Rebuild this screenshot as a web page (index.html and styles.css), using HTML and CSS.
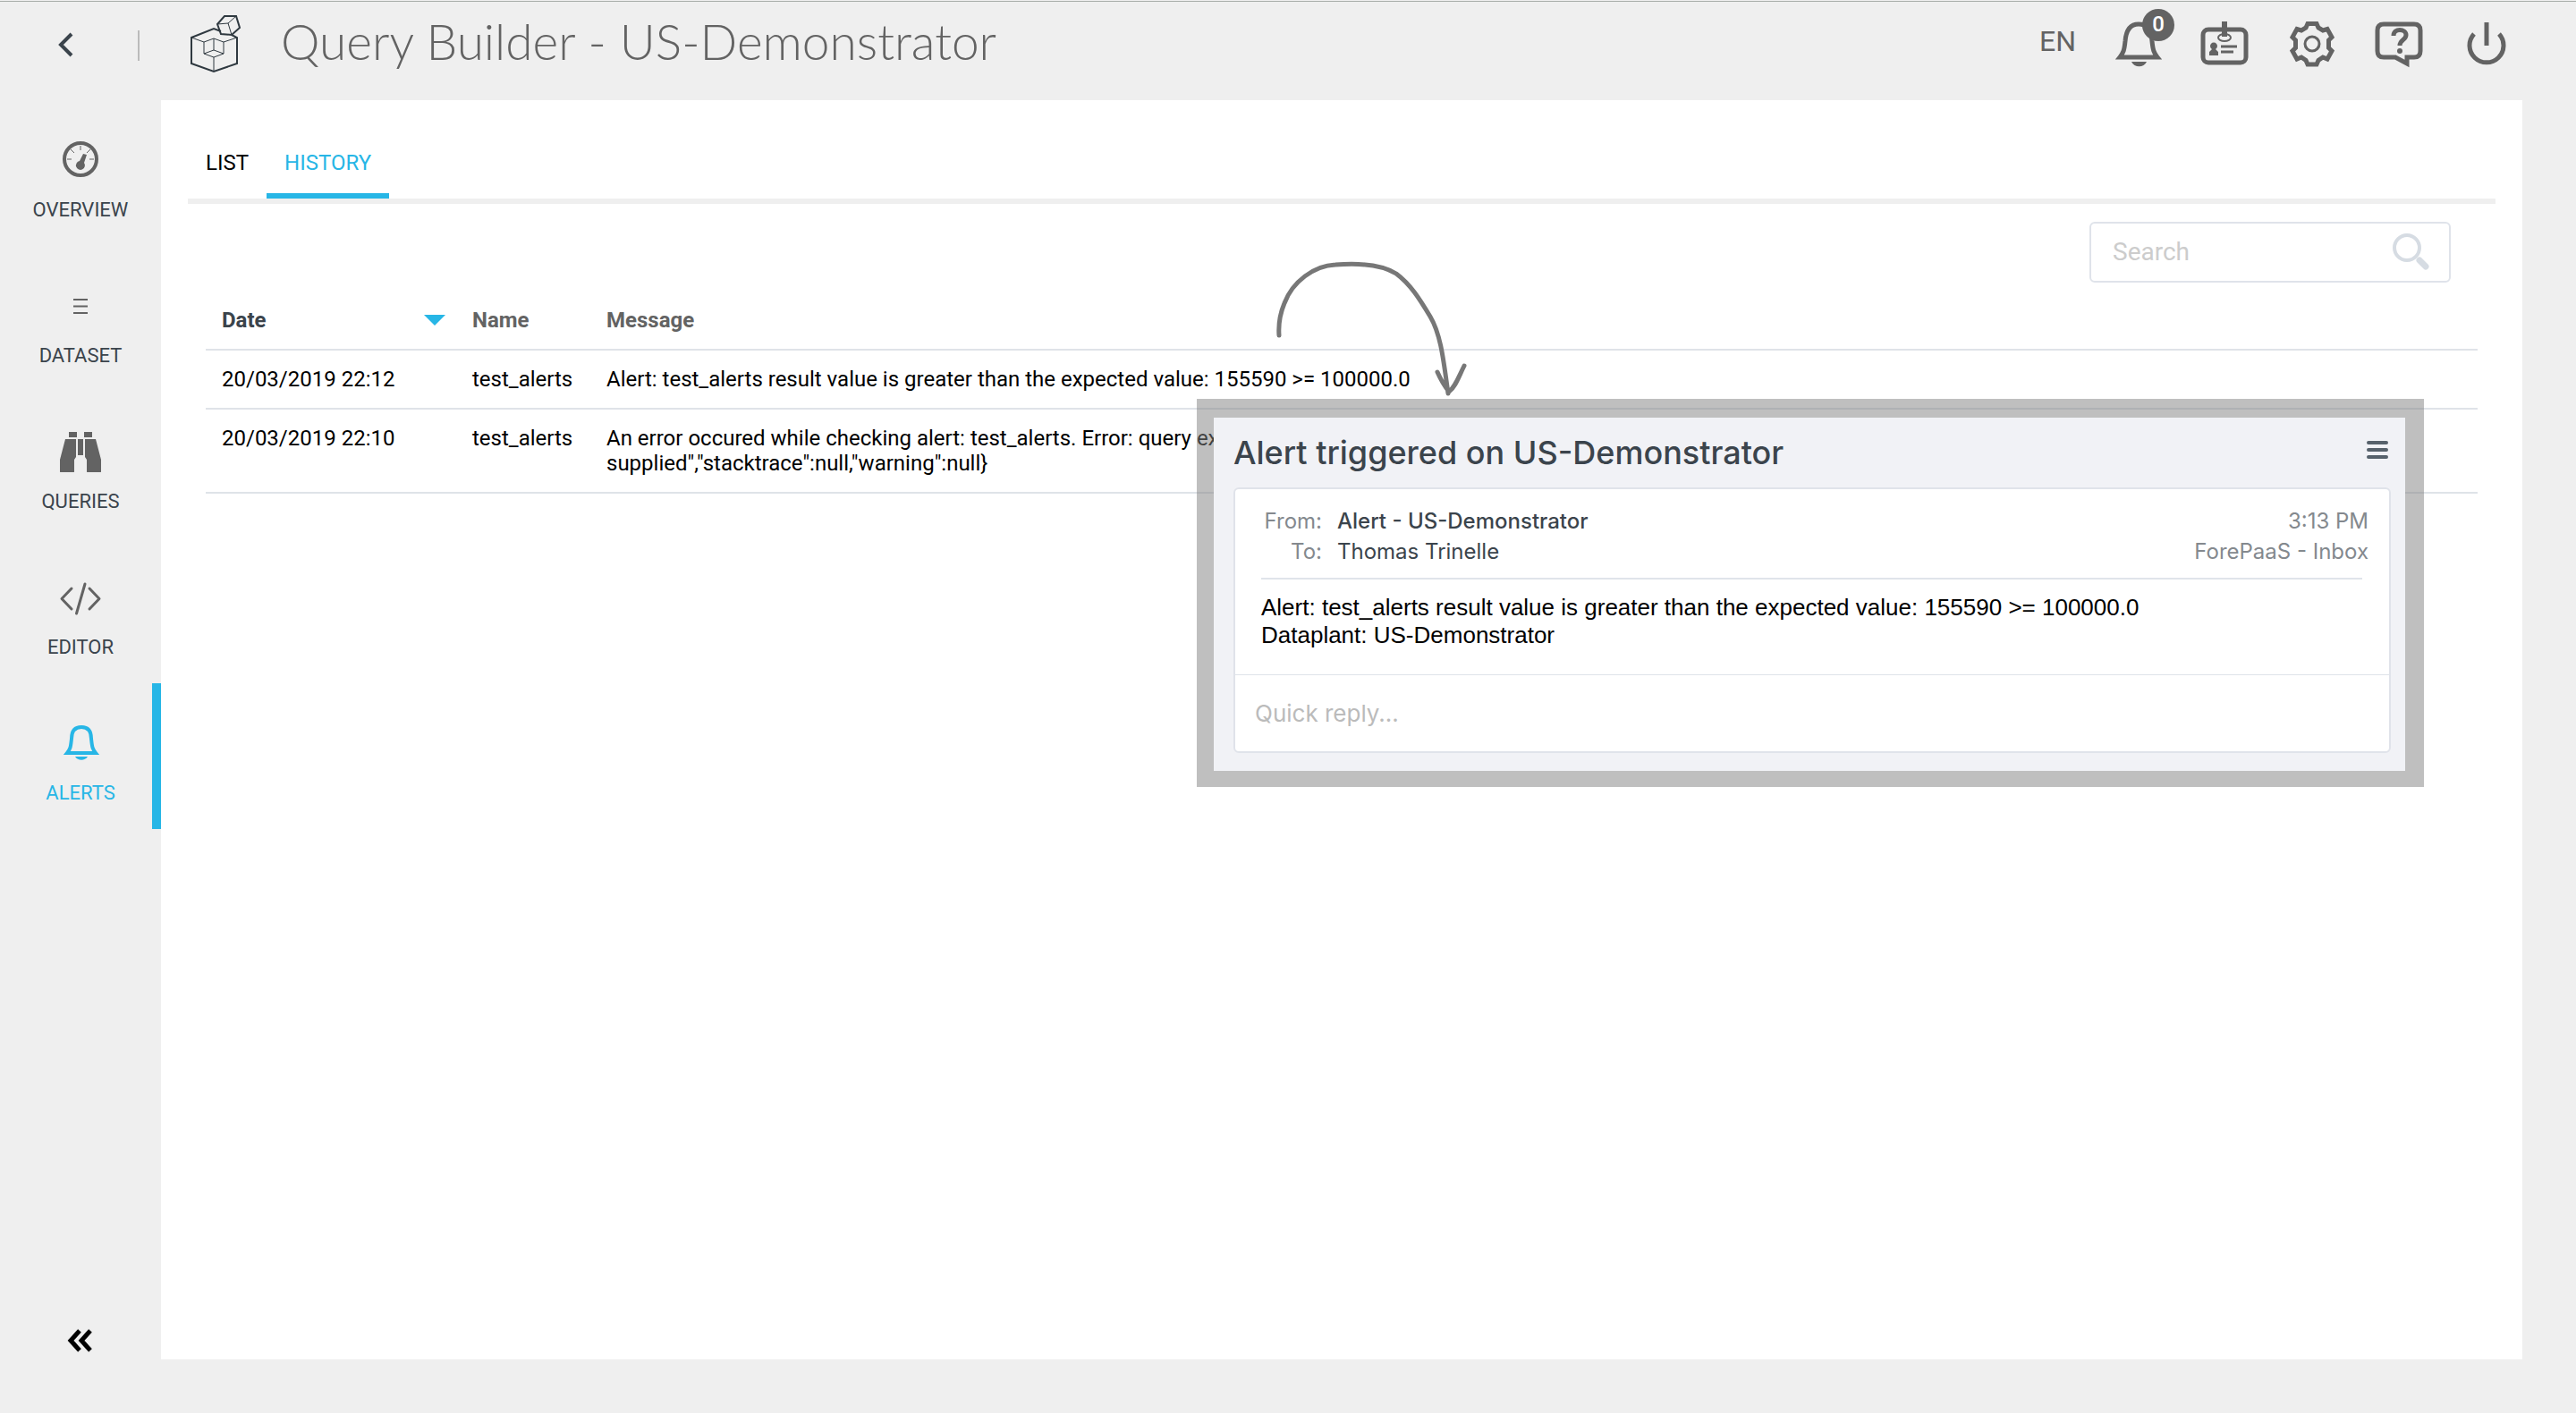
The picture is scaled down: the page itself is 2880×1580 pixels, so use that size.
FILE: index.html
```html
<!DOCTYPE html>
<html lang="en">
<head>
<meta charset="utf-8">
<meta name="viewport" content="width=device-width, initial-scale=1">
<title>Query Builder - US-Demonstrator</title>
<link rel="stylesheet" href="styles.css">
</head>
<body>
<header class="topbar">
  <button class="back" type="button" aria-label="Back">
    <svg width="20" height="32" viewBox="0 0 20 32"><path class="line line-4" d="M16 4 4 16l12 12"/></svg>
  </button>
  <span class="separator"></span>
  <svg class="logo" width="60" height="68" viewBox="0 0 60 68">
    <path class="line line-2" d="M37 19 29 16 4 26v29l25 9 26-9V26l-6-3"/>
    <path class="line line-1" d="M4 26l14 5 11-4 11 4 15-5M18 31v13l11-4 11 4V31M29 27v13M18 44l11 4 11-4M29 48v16"/>
    <path class="line line-2" d="M41 2h13l4 13-9 8-12-1-4-11z"/>
    <path class="line line-1" d="M33 11l12-1 9-8M45 10l4 13"/>
  </svg>
  <h1 class="title">Query Builder - US-Demonstrator</h1>
  <button class="lang" type="button">EN</button>
  <nav class="tools" aria-label="Account">
    <button class="tool" type="button" aria-label="Notifications">
      <svg width="60" height="60" viewBox="0 0 60 60"><path class="line line-5" d="M8 44c4-5 5-8 6-18C15 13 20 7 29 7s14 6 15 19c1 10 2 13 6 18z"/><path class="solid" d="M21 49h17c-3 7-14 7-17 0z"/></svg>
      <span class="badge">0</span>
    </button>
    <button class="tool" type="button" aria-label="Profile">
      <svg width="60" height="60" viewBox="0 0 60 60"><rect class="line line-5" x="4" y="13" width="48" height="37" rx="6"/><ellipse class="line line-2" cx="28" cy="22" rx="7" ry="4"/><path class="solid" d="M25 4h6v17h-6zM11 42v-4l3-3a4 4 0 1 1 4 0l3 3v4z"/><path class="line line-3" d="M24 32h18M24 38h14"/></svg>
    </button>
    <button class="tool" type="button" aria-label="Settings">
      <svg width="60" height="60" viewBox="0 0 60 60"><path class="line line-5" d="M24 6.500h10L36 11l5 3 5-1.500 5 9-3.500 3.500v8.500L51 37l-5 9-5-2-5 3.500-2 4.500H24l-2-4.500-5-3.500-5 2-5-9 3.500-3.500V25L7 21.500l5-9 5 1.500 5-3z"/><circle class="line line-3" cx="29" cy="29" r="8"/></svg>
    </button>
    <button class="tool" type="button" aria-label="Help">
      <svg width="60" height="60" viewBox="0 0 60 60"><path class="line line-5" d="M12 7h34q7 0 7 7v23q0 7-7 7h-8v7l-13-7H12q-7 0-7-7V14q0-7 7-7z"/><path class="line line-5" d="M23 20c0-9 14-8 14-1 0 6-7 5-7 12"/><circle class="solid" cx="30" cy="37" r="3"/></svg>
    </button>
    <button class="tool" type="button" aria-label="Log out">
      <svg width="60" height="60" viewBox="0 0 60 60"><path class="line line-5" d="M16 18a19 19 0 1 0 28 0M30 5v26"/></svg>
    </button>
  </nav>
</header>

<div class="layout">
  <nav class="sidebar" aria-label="Sections">
    <a class="item" href="#overview">
      <svg width="48" height="48" viewBox="0 0 48 48"><circle class="line line-4" cx="24" cy="24" r="18"/><path class="line line-1" d="M24 9v5M13 13l4 4M35 13l-4 4M9 24h5M34 24h5"/><path class="solid" d="M27 18l4 1-3 9a5 5 0 1 1-5-2z"/></svg>
      <span>OVERVIEW</span>
    </a>
    <a class="item" href="#dataset">
      <svg width="48" height="48" viewBox="0 0 48 48"><path class="line line-2" d="M16 18h16M16 25.500h16M16 33h16"/></svg>
      <span>DATASET</span>
    </a>
    <a class="item" href="#queries">
      <svg width="48" height="48" viewBox="0 0 48 48"><path class="solid" d="M11 3h9v6h-9zM28 3h9v6h-9zM21 11h6v18h-6zM7 11h12v20l-2 3v13q0 2-2 2H3q-2 0-2-2V34zM41 11H29v20l2 3v13q0 2 2 2h12q2 0 2-2V34z"/></svg>
      <span>QUERIES</span>
    </a>
    <a class="item" href="#editor">
      <svg width="48" height="48" viewBox="0 0 48 48"><path class="line line-3 round" d="M14 15 3 26.500 14 38M34 15l11 11.500L34 38M29 10l-9.500 33"/></svg>
      <span>EDITOR</span>
    </a>
    <a class="item active" href="#alerts" aria-current="page">
      <svg width="48" height="48" viewBox="0 0 48 48"><path class="line line-4" d="M9 36c4-5 4-7 5-16 0-9 4-13 11-13s11 4 11 13c1 9 1 11 5 16z"/><path class="solid" d="M18 40h14c-3 5-11 5-14 0z"/></svg>
      <span>ALERTS</span>
    </a>
    <button class="collapse" type="button" aria-label="Collapse menu">
      <svg width="30" height="28" viewBox="0 0 30 28"><path class="line line-5" d="M14 3 4 14l10 11M26 3 16 14l10 11"/></svg>
    </button>
  </nav>

  <main class="panel">
    <nav class="tabs" aria-label="Alerts">
      <a class="tab" href="#list">LIST</a>
      <a class="tab active" href="#history" aria-current="page">HISTORY</a>
    </nav>
    <div class="content">
      <form class="search" role="search">
        <input class="search-input" type="search" placeholder="Search" aria-label="Search">
        <svg width="44" height="44" viewBox="0 0 44 44"><circle class="line line-4" cx="17" cy="17" r="14"/><path class="line line-7 round" d="M31 31l7 7"/></svg>
      </form>
      <table class="history">
        <thead>
          <tr>
            <th class="col-date" scope="col" aria-sort="descending"><button class="sort" type="button">Date<span class="caret"></span></button></th>
            <th class="col-name" scope="col">Name</th>
            <th scope="col">Message</th>
          </tr>
        </thead>
        <tbody>
          <tr>
            <td>20/03/2019 22:12</td>
            <td>test_alerts</td>
            <td>Alert: test_alerts result value is greater than the expected value: 155590 &gt;= 100000.0</td>
          </tr>
          <tr>
            <td>20/03/2019 22:10</td>
            <td>test_alerts</td>
            <td>An error occured while checking alert: test_alerts. Error: query ex<br>supplied","stacktrace":null,"warning":null}</td>
          </tr>
        </tbody>
      </table>
    </div>

    <svg class="arrow" width="220" height="160" viewBox="0 0 220 160"><path class="line line-5 round" d="M9 86C8 72 10 62 15 50 24 26 48 8 72 7c26-2 52 0 68 10 16 12 26 28 38 48 12 20 15 50 20 86M186 127c4 9 9 17 13 22 7-5 11-17 17-29"/></svg>

    <section class="mail" aria-label="Alert email">
      <div class="mail-window">
        <div class="mail-head">
          <h2 class="mail-title">Alert triggered on US-Demonstrator</h2>
          <button class="mail-menu" type="button" aria-label="Menu">
            <svg width="26" height="28" viewBox="0 0 26 28"><path class="line line-4 round" d="M3 4h20M3 12h20M3 20h20"/></svg>
          </button>
        </div>
        <article class="mail-card">
          <div class="mail-meta">
            <dl class="people">
              <dt>From:</dt><dd class="sender">Alert - US-Demonstrator</dd>
              <dt>To:</dt><dd>Thomas Trinelle</dd>
            </dl>
            <div class="where">3:13 PM<br>ForePaaS - Inbox</div>
          </div>
          <p class="mail-body">Alert: test_alerts result value is greater than the expected value: 155590 &gt;= 100000.0<br>Dataplant: US-Demonstrator</p>
          <input class="reply" type="text" placeholder="Quick reply..." aria-label="Quick reply">
        </article>
      </div>
    </section>
  </main>
</div>
</body>
</html>
```
FILE: styles.css
```css
*,
*::before,
*::after {
  box-sizing: border-box;
}

body {
  display: flex;
  flex-direction: column;
  min-height: 100vh;
  margin: 0;
  padding-top: 1px;
  background: #efefef;
  color: #000;
  font: 24px/28px Roboto, "Liberation Sans", sans-serif;
}

button,
input {
  margin: 0;
  padding: 0;
  border: 0;
  background: none;
  color: inherit;
  font: inherit;
}

a {
  color: inherit;
  text-decoration: none;
}

svg {
  display: block;
  flex: none;
}

/* Icon strokes */
.line { fill: none; stroke: currentColor; }
.line-1 { stroke-width: 1; }
.line-2 { stroke-width: 2; }
.line-3 { stroke-width: 3; }
.line-4 { stroke-width: 4; }
.line-5 { stroke-width: 5; }
.line-7 { stroke-width: 7; }
.round { stroke-linecap: round; stroke-linejoin: round; }
.solid { fill: currentColor; }

/* Top bar */
.topbar {
  display: flex;
  align-items: flex-start;
  height: 111px;
  padding: 0 52px 0 64px;
  border-top: 1px solid #a9aeaa;
  color: #636363;
}

.back {
  margin-top: 32px;
  color: #3b444c;
}

.separator {
  width: 2px;
  height: 34px;
  margin: 32px 54px 0 70px;
  background: #bbb;
}

.logo {
  margin-top: 14px;
  color: #2f3940;
}

.title {
  flex: 1;
  margin: 8px 0 0 44px;
  font: 300 55px/72px Lato, sans-serif;
  white-space: nowrap;
}

.lang {
  margin: 24px 22px 0 0;
  font-size: 32px;
  line-height: 40px;
}

.tools {
  display: flex;
  margin-top: 18px;
}

.tool {
  position: relative;
  display: flex;
  justify-content: center;
  width: 97px;
}

.badge {
  position: absolute;
  top: -10px;
  left: 52px;
  width: 36px;
  height: 36px;
  border-radius: 50%;
  background: #636363;
  color: #fff;
  font-weight: 500;
  line-height: 34px;
  text-align: center;
}

/* Layout */
.layout {
  display: grid;
  flex: 1;
  grid-template-columns: 180px 1fr;
}

.sidebar {
  display: flex;
  flex-direction: column;
  color: #636363;
}

.item {
  display: flex;
  flex-direction: column;
  align-items: center;
  gap: 19px;
  padding: 42px 0 26px;
  font-size: 22px;
}

.item span {
  color: #3b444c;
}

.item.active,
.item.active span {
  color: #27b6e6;
}

.item.active {
  box-shadow: inset -10px 0 #27b6e6;
}

.collapse {
  align-self: center;
  margin: auto 0 67px;
  color: #000;
}

.panel {
  position: relative;
  margin: 0 60px 60px 0;
  padding: 46px 30px;
  background: #fff;
}

/* Tabs */
.tabs {
  display: flex;
  border-bottom: 6px solid #efefef;
}

.tab {
  padding: 10px 20px 20px;
  border-bottom: 6px solid transparent;
}

.tab.active {
  border-color: #27b6e6;
  color: #27b6e6;
}

.content {
  padding: 20px 20px 0;
}

/* Search */
.search {
  display: flex;
  align-items: center;
  width: 404px;
  height: 68px;
  margin: 0 30px 0 auto;
  padding: 0 20px 0 24px;
  border: 2px solid #dfe3ea;
  border-radius: 6px;
  color: #d6dce3;
}

.search-input {
  flex: 1;
  min-width: 0;
  outline: 0;
  color: #333;
  font-size: 28px;
  line-height: 36px;
}

.search-input::placeholder {
  color: #ccc;
  opacity: 1;
}

/* History table */
.history {
  width: 100%;
  border-collapse: separate;
  border-spacing: 0;
  table-layout: fixed;
}

.history th,
.history td {
  padding: 18px;
  border-bottom: 2px solid #dfe3e8;
  text-align: left;
  vertical-align: top;
}

.history th {
  padding-top: 28px;
  color: #636363;
  font-weight: 700;
}

.history .col-date {
  width: 280px;
  padding-right: 12px;
}

.col-name {
  width: 150px;
}

.sort {
  display: flex;
  align-items: center;
  justify-content: space-between;
  width: 100%;
  color: #3b444c;
}

.caret {
  border: 12px solid transparent;
  border-top-color: #27b6e6;
  border-bottom-width: 0;
}

/* Annotation arrow and email preview, laid over the table */
.arrow {
  position: absolute;
  top: 177px;
  left: 1241px;
  color: #777;
}

.mail {
  position: absolute;
  top: 334px;
  right: 110px;
  left: 1158px;
  padding: 21px 21px 18px 19px;
  background: rgba(128, 128, 128, 0.5);
}

.mail-window {
  padding: 17px 16px 20px 22px;
  background: #f1f2f6;
  color: #3b444c;
  font-family: Inter, sans-serif;
}

.mail-head {
  display: flex;
  align-items: flex-start;
  justify-content: space-between;
  padding-right: 2px;
}

.mail-title {
  margin: 0 0 17px;
  font-size: 36px;
  font-weight: 500;
  line-height: 44px;
}

.mail-menu {
  margin-top: 7px;
  color: #56616b;
}

.mail-card {
  border: 2px solid #e0e3ea;
  border-radius: 6px;
  background: #fff;
}

.mail-meta {
  display: flex;
  justify-content: space-between;
  margin: 0 30px 0 29px;
  padding: 19px 0 12px;
  border-bottom: 2px solid #e0e4ea;
  line-height: 34px;
}

.people {
  display: grid;
  grid-template-columns: 68px auto;
  column-gap: 17px;
  margin: 0;
}

.people dt {
  color: #84898e;
  text-align: right;
}

.people dd {
  margin: 0;
}

.sender {
  font-weight: 500;
}

.where {
  margin-right: -7px;
  color: #84898e;
  text-align: right;
}

.mail-body {
  margin: 0;
  padding: 16px 29px 28px;
  color: #000;
  font: 26px/31px "Liberation Sans", Arial, sans-serif;
}

.reply {
  display: block;
  width: 100%;
  height: 86px;
  padding: 0 22px;
  border-top: 1px solid #dfe3ea;
  font-size: 26px;
}

.reply::placeholder {
  color: #bbb;
  opacity: 1;
}
```
